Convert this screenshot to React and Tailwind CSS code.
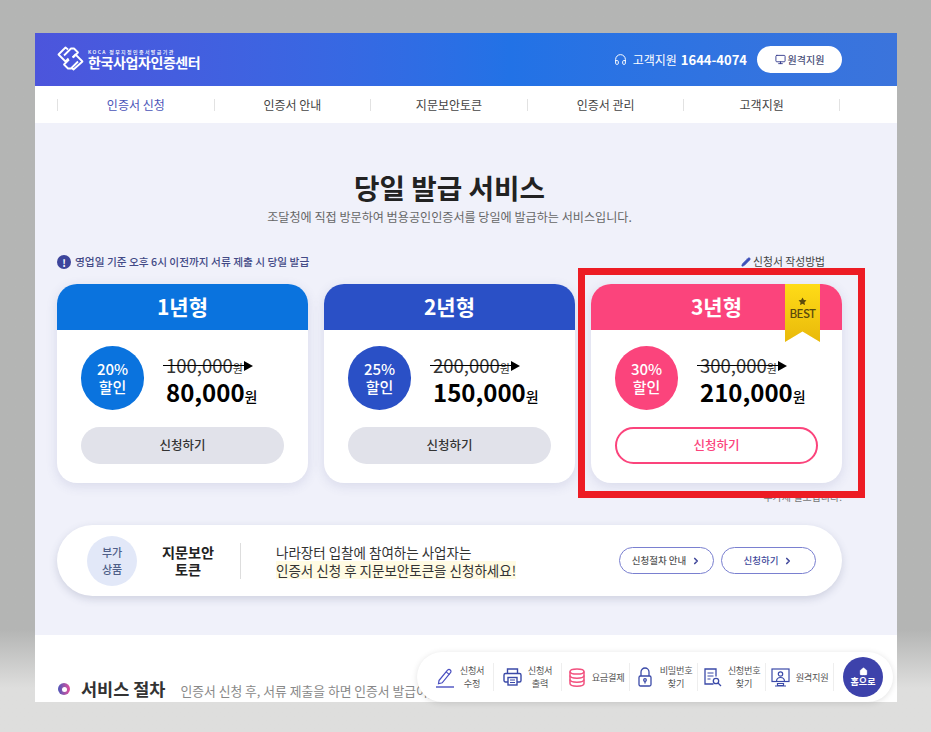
import React from "react";
import { Star, Pencil, ChevronRight, Headphones, Monitor, Home } from "lucide-react";

const font = { fontFamily: '"Noto Sans CJK KR", "Noto Sans", sans-serif' };

const plans = [
  { name: "1년형", rate: "20%", was: "100,000", now: "80,000", head: "bg-[#0a73de]", best: false },
  { name: "2년형", rate: "25%", was: "200,000", now: "150,000", head: "bg-[#2a50c6]", best: false },
  { name: "3년형", rate: "30%", was: "300,000", now: "210,000", head: "bg-[#fb447c]", best: true },
];

const menu = ["인증서 신청", "인증서 안내", "지문보안토큰", "인증서 관리", "고객지원"];

const PenIcon = () => (
  <svg width="18" height="21" viewBox="0 0 18 21" fill="none" stroke="#4a4fc0" strokeWidth="1.2">
    <path d="M3 13.5 11.500 3.200c.8-.8 2-.9 2.800-.2.800.7.900 1.900.2 2.700L6.200 15.800l-3.700 1z" />
    <path d="M10.200 4.900l3.200 2.700" />
    <path d="M0 20h18" strokeWidth="1.4" />
  </svg>
);

const PrintIcon = () => (
  <svg width="19" height="18" viewBox="0 0 19 18" fill="none" stroke="#3b4aa8" strokeWidth="1.4">
    <path d="M4.500 5.500V1h10v4.500" />
    <rect x="1" y="5.500" width="17" height="8.500" rx="1.500" />
    <rect x="5" y="9.500" width="9" height="7.500" fill="#fff" />
    <path d="M7 12h5M7 14.500h5" strokeWidth="1" />
  </svg>
);

const DbIcon = () => (
  <svg width="16" height="19" viewBox="0 0 16 19" fill="none" stroke="#f2527f" strokeWidth="1.5">
    <ellipse cx="8" cy="3.500" rx="7" ry="2.600" />
    <path d="M1 3.500v12c0 1.500 3.100 2.700 7 2.700s7-1.200 7-2.700v-12" />
    <path d="M1 7.500c0 1.500 3.100 2.700 7 2.700s7-1.200 7-2.700M1 11.500c0 1.500 3.100 2.700 7 2.700s7-1.200 7-2.700" />
  </svg>
);

const LockIcon = () => (
  <svg width="14" height="20" viewBox="0 0 14 20" fill="none" stroke="#3b4aa8" strokeWidth="1.300">
    <path d="M3 9V5a4 4 0 0 1 8 0v4" />
    <rect x="1" y="9" width="12" height="10" rx="1.500" />
    <circle cx="7" cy="13" r="1.300" />
    <path d="M7 14.300V16.500" />
  </svg>
);

const SearchDocIcon = () => (
  <svg width="18" height="19" viewBox="0 0 18 19" fill="none" stroke="#3b4aa8" strokeWidth="1.300">
    <path d="M9.500 16H1V1h11v7.500" />
    <path d="M3.500 5h6M3.500 8h6M3.500 11h3" strokeWidth="1.100" />
    <circle cx="12" cy="13" r="2.700" />
    <path d="M14 15l3 3" />
  </svg>
);

const RemoteIcon = () => (
  <svg width="19" height="19" viewBox="0 0 19 19" fill="none" stroke="#3b4aa8" strokeWidth="1.200">
    <rect x="1" y="1" width="17" height="12.500" />
    <circle cx="9.500" cy="6" r="2.200" />
    <path d="M5.500 13.500c0-3 1.800-4 4-4s4 1 4 4" />
    <path d="M6.500 15.500h6v2h-6zM4 18h11" />
  </svg>
);

const dock = [
  { icon: <PenIcon />, label: ["신청서", "수정"] },
  { icon: <PrintIcon />, label: ["신청서", "출력"] },
  { icon: <DbIcon />, label: ["요금결제"] },
  { icon: <LockIcon />, label: ["비밀번호", "찾기"] },
  { icon: <SearchDocIcon />, label: ["신청번호", "찾기"] },
  { icon: <RemoteIcon />, label: ["원격지원"] },
];

const PlanCard = ({ plan }) => (
  <div className="relative h-[199px] w-[251px] overflow-hidden rounded-[20px] bg-white shadow-[0_3px_12px_rgba(70,80,140,0.14)]">
    <div className={`${plan.head} flex h-[46px] items-center justify-center text-[21px] font-bold text-white`}>
      {plan.name}
    </div>
    {plan.best && (
      <div className="absolute left-[194px] top-0 flex h-[58px] w-[35px] flex-col items-center bg-gradient-to-b from-[#ffdc17] to-[#e9b90a] pt-[13px] text-[#5d4b0c] [clip-path:polygon(0_0,100%_0,100%_100%,50%_82%,0_100%)]">
        <Star size={9} fill="#5d4b0c" strokeWidth={0} />
        <span className="text-[11.5px] font-medium leading-[15px] tracking-[-0.6px]">BEST</span>
      </div>
    )}
    <div className="flex items-center pl-[24px] pt-4">
      <div className={`${plan.head} flex h-[64px] w-[63px] flex-col items-center justify-center rounded-full text-[15px] font-medium leading-[18px] text-white`}>
        <span>{plan.rate}</span>
        <span>할인</span>
      </div>
      <div className="ml-[22px] pt-[4px]">
        <div className="relative flex h-[22px] w-[90px] items-baseline text-[#333]">
          <span className="text-[18.5px] leading-[22px]">{plan.was}</span>
          <span className="text-[11px]">원</span>
          <span className="absolute left-[-3px] top-[11px] h-[1.5px] w-[84px] bg-black" />
          <span className="absolute left-[78px] top-[7px] h-0 w-0 border-y-[5px] border-l-[9px] border-y-transparent border-l-black" />
        </div>
        <div className="mt-[1px] flex items-baseline whitespace-nowrap text-black">
          <span className="text-[24px] font-bold leading-[30px]">{plan.now}</span>
          <span className="text-[14px] font-medium">원</span>
        </div>
      </div>
    </div>
    <div className="mt-[17px] px-[24px]">
      {plan.best ? (
        <button className="h-[37px] w-[203px] rounded-full border-2 border-[#fb447c] bg-white text-[12.5px] font-medium text-[#fb447c]">
          신청하기
        </button>
      ) : (
        <button className="h-[37px] w-[203px] rounded-full bg-[#e1e2ea] text-[12.5px] font-medium text-[#333]">
          신청하기
        </button>
      )}
    </div>
  </div>
);

export default function App() {
  return (
    <div
      style={font}
      className="relative h-[732px] w-[931px] overflow-hidden bg-gradient-to-b from-[#b4b5b4] from-[86%] to-[#dededd] to-[94%] px-[35px] pt-[33px]"
    >
      <div className="relative h-[669px] w-[862px] overflow-hidden bg-white">
        <header className="flex h-[53px] items-center justify-between bg-gradient-to-r from-[#4c55dc] via-[#2272e6] via-[55%] to-[#3b74dc] pl-[22px] pr-[55px] text-white">
          <div className="mb-[2px] flex items-center gap-[3px]">
            <svg width="28" height="25" viewBox="0 0 28 25" fill="none" stroke="#fff" strokeWidth="1.800" strokeLinejoin="round">
              <path d="M11 3.500 8.500 1.500 1.500 8.500l7 7 3-3" />
              <path d="M7 9.500 14 2.500l3 0 4 4-5 5" />
              <path d="M14 21.500l2.500 2 9-8-7-7-3 3" />
              <path d="M21 15.500 14 22.500l-3 0-4-4 5-5" />
            </svg>
            <div className="leading-none">
              <div className="whitespace-nowrap text-[5px] font-medium leading-[7px] tracking-[1.35px]">KOCA 정부지정인증서발급기관</div>
              <div className="whitespace-nowrap text-[14px] font-bold leading-[15px] tracking-[-0.4px]">한국사업자인증센터</div>
            </div>
          </div>
          <div className="flex items-center">
            <Headphones size={13} strokeWidth={1.8} />
            <span className="ml-[6px] text-[12px]">고객지원</span>
            <span className="ml-[4px] text-[13px] font-bold">1644-4074</span>
            <button className="ml-[10px] flex h-[27px] w-[85px] items-center justify-center gap-[2px] rounded-full bg-white text-[10px] font-medium text-[#4a4f7a]">
              <Monitor size={11} color="#333a8c" strokeWidth={2} />
              원격지원
            </button>
          </div>
        </header>
        <nav className="mt-px flex h-[36px] items-center px-[22px]">
          {menu.map((m, i) => (
            <div
              key={m}
              className={`flex h-[12px] w-[156.6px] items-center justify-center border-l border-[#e2e2e2] text-[12px] ${
                i === 0 ? "text-[#4b55b8]" : "text-[#444]"
              } ${i === 4 ? "border-r" : ""}`}
            >
              {m}
            </div>
          ))}
        </nav>
        <main className="h-[512px] bg-[#f0f1fa] pl-[22px] pr-[55px] pt-[46px]">
          <h1 className="text-center text-[27.7px] font-bold leading-[36px] text-[#222]">당일 발급 서비스</h1>
          <p className="mt-[4px] text-center text-[12.1px] leading-[16px] text-[#666]">
            조달청에 직접 방문하여 범용공인인증서를 당일에 발급하는 서비스입니다.
          </p>
          <div className="mt-[29px] flex h-[16px] items-center justify-between">
            <div className="flex items-center gap-[4px] text-[10.7px] font-medium text-[#434a86]">
              <span className="flex h-[14px] w-[14px] items-center justify-center rounded-full bg-[#3d459b] text-[10px] font-bold text-white">!</span>
              영업일 기준 오후 6시 이전까지 서류 제출 시 당일 발급
            </div>
            <div className="mr-[17px] flex items-center gap-[2px] border-b border-[#555] text-[10.8px] leading-[13px] text-[#444]">
              <Pencil size={10} fill="#3d4fb8" color="#3d4fb8" />
              신청서 작성방법
            </div>
          </div>
          <div className="mt-[14px] flex gap-4">
            {plans.map((p) => (
              <PlanCard key={p.name} plan={p} />
            ))}
          </div>
          <p className="mt-[7px] text-right text-[10px] leading-[14px] text-[#777]">부가세 별도입니다.</p>
          <section className="mt-[21px] flex h-[71px] items-center rounded-full bg-white pl-[30px] shadow-[0_3px_8px_rgba(70,80,120,0.2)]">
            <div className="flex h-[50px] w-[50px] flex-col items-center justify-center rounded-full bg-[#e2e8f8] text-[11px] font-medium leading-[17px] text-[#4f5f88]">
              <span>부가</span>
              <span>상품</span>
            </div>
            <div className="ml-[24px] w-[54px] whitespace-nowrap text-center text-[14.2px] font-bold leading-[17px] text-[#222]">
              지문보안
              <br />
              토큰
            </div>
            <div className="ml-[25px] h-[36px] w-px bg-[#ddd]" />
            <div className="ml-[35px] text-[13.5px] leading-[18px] text-[#333]">
              <div>나라장터 입찰에 참여하는 사업자는</div>
              <div className="bg-[#fffbe3]">인증서 신청 후 지문보안토큰을 신청하세요!</div>
            </div>
            <div className="ml-auto mr-[26px] flex gap-[7px]">
              <button className="flex h-[27px] w-[95px] items-center justify-center gap-[5px] rounded-full border border-[#7a80d0] text-[9.5px] font-medium text-[#555]">
                신청절차 안내
                <ChevronRight size={10} color="#434a9c" strokeWidth={4} />
              </button>
              <button className="flex h-[27px] w-[95px] items-center justify-center gap-[5px] rounded-full border border-[#7a80d0] text-[9.5px] font-medium text-[#434a9c]">
                신청하기
                <ChevronRight size={10} color="#434a9c" strokeWidth={4} />
              </button>
            </div>
          </section>
        </main>
        <section className="flex items-baseline pl-[23px] pt-[41px]">
          <span className="flex h-[12px] w-[12px] items-center justify-center self-center rounded-full bg-gradient-to-r from-[#4a52b8] to-[#e0489a]">
            <span className="h-[5px] w-[5px] rounded-full bg-white" />
          </span>
          <h2 className="ml-[11px] whitespace-nowrap text-[17.5px] font-bold text-[#333]">서비스 절차</h2>
          <p className="ml-[15px] whitespace-nowrap text-[12.8px] text-[#888]">인증서 신청 후, 서류 제출을 하면 인증서 발급이, 진행됩니다.</p>
        </section>
      </div>

      {/* 하단 퀵메뉴 */}
      <div className="absolute left-[417px] top-[652px] flex h-[50px] w-[476px] items-center rounded-[25px] bg-white pl-[9px] shadow-[0_1px_6px_rgba(0,0,0,0.12)]">
        {dock.map((d, i) => (
          <div key={i} className="flex h-[28px] w-[68px] items-center justify-center gap-[5px] border-r border-[#eee] last:border-r-0">
            <span className="flex w-[20px] shrink-0 justify-center">{d.icon}</span>
            <span className="text-center text-[9.2px] leading-[13px] tracking-[-0.3px] text-[#555]">
              {d.label.map((l) => (
                <span key={l} className="block whitespace-nowrap">{l}</span>
              ))}
            </span>
          </div>
        ))}
        <div className="ml-[9px] flex h-[40px] w-[40px] flex-col items-center justify-center rounded-full bg-[#3d42ab] text-[9px] font-bold leading-[12px] text-white">
          <Home size={9} fill="#fff" strokeWidth={1} />
          홈으로
        </div>
      </div>

      {/* 빨간 강조 박스 */}
      <div className="absolute left-[578px] top-[268px] h-[230px] w-[287px] border-[7px] border-[#ed1c24]" />
    </div>
  );
}
